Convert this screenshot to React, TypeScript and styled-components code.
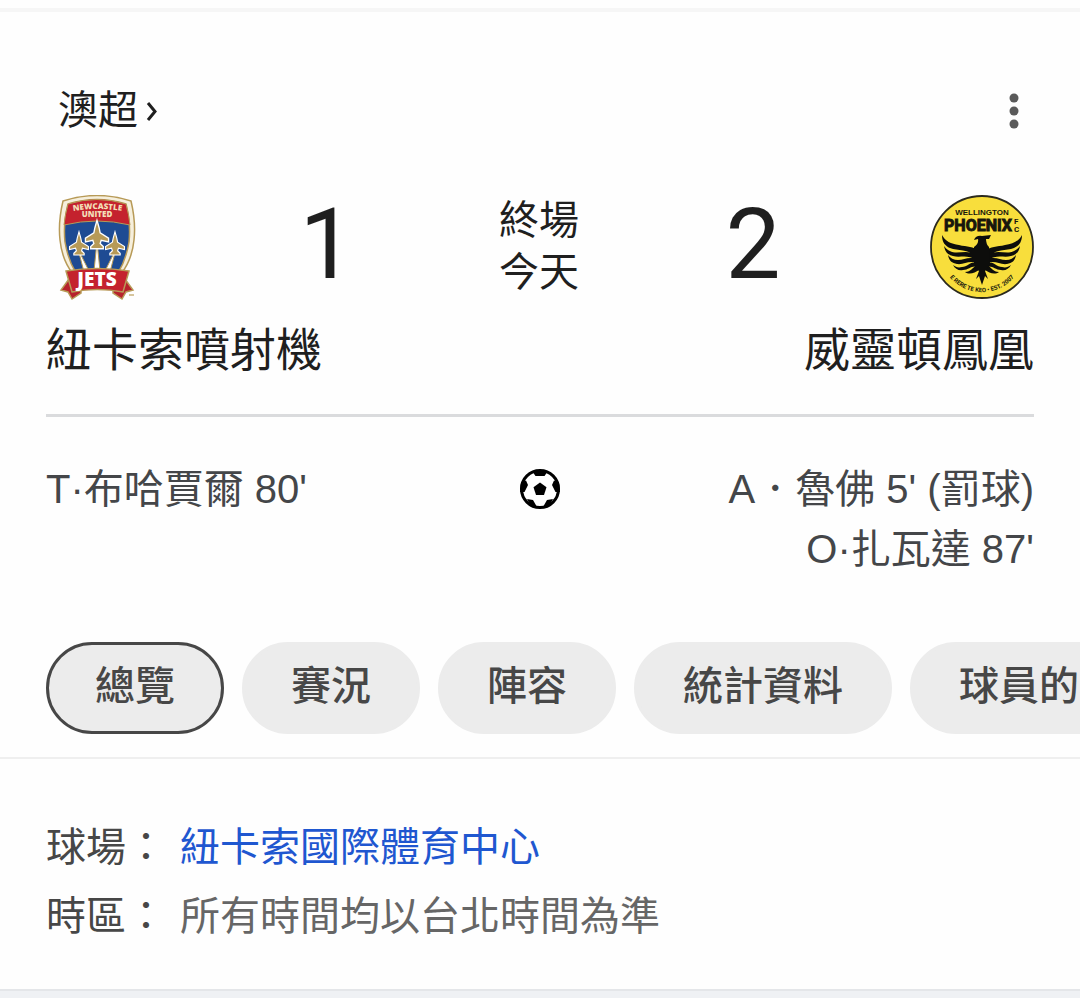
import React from "react";
import styled, { createGlobalStyle } from "styled-components";

const Global = createGlobalStyle`
  * { box-sizing: border-box; }
  body {
    margin: 0;
    background: #eff1f4;
    color: #1f1f1f;
    font-family: Roboto, "Noto Sans CJK TC", sans-serif;
    overflow-x: hidden;
  }
`;

const Page = styled.div`
  display: flow-root;
  background: #fefefe;
`;

const Card = styled.main`
  margin-top: 8px;
  border-top: 4px solid #f6f6f6;
  border-bottom: 2px solid #e4e6e9;
  background: #fefefe;
`;

const Match = styled.section`
  padding: 68px 46px 0;
`;

const Header = styled.header`
  display: flex;
  align-items: center;
  justify-content: space-between;
  height: 62px;
  padding: 0 12px;
`;

const League = styled.a`
  display: flex;
  align-items: center;
  gap: 8px;
  color: #1f1f1f;
  font-size: 40px;
  line-height: 60px;
  text-decoration: none;
`;

const MenuButton = styled.button`
  display: flex;
  padding: 0;
  border: 0;
  background: none;
`;

const Scoreboard = styled.div`
  display: grid;
  grid-template-columns: 1fr auto auto auto 1fr;
  align-items: start;
  height: 104px;
  margin-top: 53px;
`;

const CrestSlot = styled.div<{ $end?: boolean }>`
  display: flex;
  justify-content: ${(p) => (p.$end ? "flex-end" : "flex-start")};
  padding-left: 12px;
`;

const Score = styled.span`
  width: 56px;
  font-size: 98px;
  line-height: 100px;
  text-align: center;
`;

const Status = styled.div`
  margin: 0 146px 0 144px;
  font-size: 40px;
  line-height: 52px;
`;

const Names = styled.div`
  display: flex;
  justify-content: space-between;
  margin-top: 17px;
  font-size: 46px;
  line-height: 68px;
`;

const Goals = styled.div`
  display: grid;
  grid-template-columns: 1fr auto 1fr;
  margin-top: 30px;
  padding-top: 42px;
  border-top: 3px solid #dadbdd;
  color: #444649;
  font-size: 40px;
  line-height: 60px;
`;

const GoalList = styled.ul<{ $end?: boolean }>`
  margin: 0;
  padding: 0;
  list-style: none;
  text-align: ${(p) => (p.$end ? "right" : "left")};
  font-family: "Liberation Sans", "Noto Sans CJK TC", sans-serif;
`;

const BallSlot = styled.div`
  display: flex;
  align-items: center;
  height: 60px;
`;

const Tabs = styled.nav`
  display: flex;
  gap: 18px;
  margin-top: 63px;
  padding: 0 0 23px 46px;
  border-bottom: 2px solid #efefef;
  overflow: hidden;
`;

const Tab = styled.button<{ $active?: boolean }>`
  flex: none;
  height: 92px;
  padding: 0 46px 2px;
  border: 3px solid ${(p) => (p.$active ? "#474747" : "#ececec")};
  border-radius: 46px;
  background: #ececec;
  color: #474747;
  font-family: inherit;
  font-size: 40px;
  font-weight: 500;
  line-height: 60px;
`;

const Info = styled.dl`
  margin: 0;
  padding: 54px 46px 38px;
  font-size: 40px;
  line-height: 69px;
`;

const InfoRow = styled.div`
  display: flex;
  gap: 14px;
`;

const Term = styled.dt`
  color: #474747;
`;

const Detail = styled.dd`
  margin: 0;
  color: #666;
`;

const VenueLink = styled.a`
  color: #1f57d0;
  text-decoration: none;
`;

const Footer = styled.div`
  height: 8px;
  background: #eff1f4;
`;

const Jet = ({ x, y, s }: { x: number; y: number; s: number }) => (
  <path
    transform={`translate(${x} ${y}) scale(${s})`}
    d="M0-13 L2-6 L3-1 L11 4 V7.500 L4 6 L3 9 L6 12 V14 H-6 V12 L-3 9 L-4 6 L-11 7.500 V4 L-3-1 L-2-6Z"
    fill="#b79a57"
    stroke="#fff"
    strokeWidth="1.300"
  />
);

const JetsCrest = () => (
  <svg width="80" height="106" viewBox="0 0 80 106" role="img" aria-label="Newcastle United Jets">
    <defs>
      <path id="club" d="M10 17 Q39 11 69 17" />
    </defs>
    <path d="M5 6 Q39-5 73 6 Q78 27 76 45 Q74 65 63 79 L39 86 L15 79 Q4 65 2 45 Q0 27 5 6Z" fill="#f6efdc" stroke="#b79a57" strokeWidth="1.500" />
    <path d="M10 9 Q39 0 68 9 Q73 29 71 47 Q68 65 60 78 L39 82 L18 78 Q10 65 7 47 Q5 29 10 9Z" fill="#1e4b93" stroke="#b79a57" strokeWidth="1.500" />
    <path d="M10 9 Q39 0 68 9 Q71 20 72 30 Q39 22 6 30 Q7 20 10 9Z" fill="#c4222e" stroke="#b79a57" strokeWidth="1" />
    <path d="M39 46 L36 76 H42Z M20 54 L26 77 L31 76Z M58 54 L52 77 L47 76Z" fill="#fff" stroke="#b79a57" strokeWidth="1" />
    <Jet x={21} y={48} s={0.86} />
    <Jet x={57} y={48} s={0.86} />
    <Jet x={39} y={39} s={1.05} />
    <g fill="#f3dfb8" fontFamily="Open Sans, sans-serif" fontWeight="800" textAnchor="middle">
      <text fontSize="8">
        <textPath href="#club" startOffset="50%">NEWCASTLE</textPath>
      </text>
      <text x="39" y="22" fontSize="8">UNITED</text>
    </g>
    <path d="M11 84 L3 95 L10 97 L14 104 L23 98 V90Z M67 84 L75 95 L68 97 L64 104 L55 98 V90Z" fill="#b7222c" stroke="#b79a57" strokeWidth="1.500" />
    <path d="M8 76 Q39 71 71 76 L65 97 Q39 92 14 97Z" fill="#c4222e" stroke="#b79a57" strokeWidth="1.500" />
    <text x="39" y="91" fill="#fff" fontFamily="Open Sans, sans-serif" fontSize="19" fontWeight="800" textAnchor="middle">JETS</text>
    <path d="M71 100 H76" stroke="#c9b27c" strokeWidth="1.500" />
  </svg>
);

const feathers =
  "M-4 56 C-8 51-15 52-23 50 C-31 49-37 46-40 40 C-40 47-37 51-32 53 C-24 56-14 54-6 61Z " +
  "M-6 60 C-14 55-20 58-27 57.500 C-32 57-36 54-38 51 C-37 57-34 60-29 61 C-22 63-14 59-6 65Z " +
  "M-6 64 C-13 61-18 65-24 65 C-28 65-32 63-34 60 C-33 66-30 68-25 69 C-18 70-13 65-6 68Z " +
  "M-6 67 C-12 67-15 72-20 72 C-24 73-26 72-29 70 C-27 74-23 76-19 75 C-13 75-10 70-5 72Z " +
  "M-5 70 C-9 72-11 77-17 77 C-13 80-7 78-3 75Z";

const PhoenixCrest = () => (
  <svg width="104" height="104" viewBox="0 0 104 104" role="img" aria-label="Wellington Phoenix FC">
    <defs>
      <path id="motto" d="M15 75 A42 42 0 0 0 89 75" />
    </defs>
    <circle cx="52" cy="52" r="51" fill="#f8de3c" stroke="#2b2a1d" strokeWidth="1.800" />
    <g fill="#17160c" fontFamily="Roboto, sans-serif" fontWeight="700">
      <text x="52" y="20" fontFamily="Liberation Sans, sans-serif" fontSize="8" textAnchor="middle">WELLINGTON</text>
      <text x="48" y="36" fontSize="16" textAnchor="middle" stroke="#17160c" strokeWidth="1">PHOENIX</text>
      <text x="84" y="29" fontSize="8">F</text>
      <text x="84" y="37" fontSize="8">C</text>
      <text fontSize="6">
        <textPath href="#motto" startOffset="50%" textAnchor="middle">E RERE TE KEO • EST. 2007</textPath>
      </text>
    </g>
    <g fill="#0d0d0b">
      <path d={feathers} transform="translate(52 0)" />
      <path d={feathers} transform="translate(52 0) scale(-1 1)" />
      <path d="M44 45 Q46 40 52 41 L61 40 L59 44 L56 44 Q56 49 59 52 L60 69 Q58 74 55 76 L58 84 L55 81 L52 90 L49 81 L46 84 L49 76 Q45 73 44 69 V52 Q49 49 48 44Z" />
    </g>
  </svg>
);

const Ball = () => (
  <svg width="42" height="42" viewBox="0 0 42 42" role="img" aria-label="進球">
    <circle cx="21" cy="21" r="18.500" fill="#fff" stroke="#000" strokeWidth="3" />
    <path d="M21 14.500 L27.500 19.200 L25 27 H17 L14.500 19.200Z" fill="#000" />
    <path d="M13 3 H29 L25.500 8 H16.500Z M2 14 L7 12.500 L9 17 L5.500 24 L1 24Z M40 14 L35 12.500 L33 17 L36.500 24 L41 24Z M8 31 L14 32 L18 39 L12 38.500Z M34 31 L28 32 L24 39 L30 38.500Z" fill="#000" />
  </svg>
);

const tabs = ["總覽", "賽況", "陣容", "統計資料", "球員的表現"];

export default function App() {
  return (
    <Page>
      <Global />
      <Card>
        <Match>
          <Header>
            <League href="#league">
              澳超
              <svg width="14" height="24" viewBox="0 0 14 24" fill="none" stroke="#1f1f1f" strokeWidth="3" aria-hidden="true">
                <path d="M2 4 L9 12.500 L2 21" />
              </svg>
            </League>
            <MenuButton aria-label="更多選項">
              <svg width="16" height="40" viewBox="0 0 16 40" fill="#5a5a5a">
                <circle cx="8" cy="7" r="4.500" />
                <circle cx="8" cy="20" r="4.500" />
                <circle cx="8" cy="33" r="4.500" />
              </svg>
            </MenuButton>
          </Header>
          <Scoreboard>
            <CrestSlot><JetsCrest /></CrestSlot>
            <Score>1</Score>
            <Status>
              <div>終場</div>
              <div>今天</div>
            </Status>
            <Score>2</Score>
            <CrestSlot $end><PhoenixCrest /></CrestSlot>
          </Scoreboard>
          <Names>
            <span>紐卡索噴射機</span>
            <span>威靈頓鳳凰</span>
          </Names>
          <Goals>
            <GoalList>
              <li>T·布哈賈爾 80'</li>
            </GoalList>
            <BallSlot><Ball /></BallSlot>
            <GoalList $end>
              <li>A．魯佛 5' (罰球)</li>
              <li>O·扎瓦達 87'</li>
            </GoalList>
          </Goals>
        </Match>
        <Tabs>
          {tabs.map((t, i) => (
            <Tab key={t} $active={i === 0}>{t}</Tab>
          ))}
        </Tabs>
        <Info>
          <InfoRow>
            <Term>球場：</Term>
            <Detail><VenueLink href="#venue">紐卡索國際體育中心</VenueLink></Detail>
          </InfoRow>
          <InfoRow>
            <Term>時區：</Term>
            <Detail>所有時間均以台北時間為準</Detail>
          </InfoRow>
        </Info>
      </Card>
      <Footer />
    </Page>
  );
}
